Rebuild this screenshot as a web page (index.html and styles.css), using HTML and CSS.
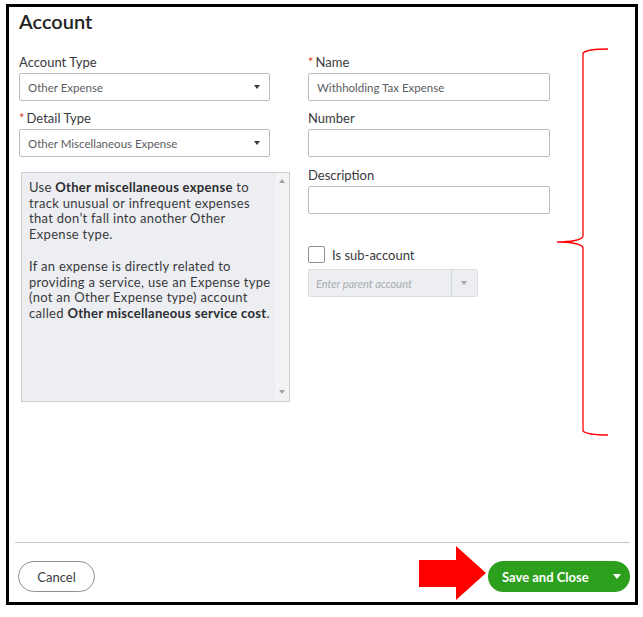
FILE: index.html
```html
<!DOCTYPE html>
<html lang="en">
<head>
  <meta charset="UTF-8">
  <meta name="viewport" content="width=device-width, initial-scale=1.0">
  <title>Account</title>
  <link rel="stylesheet" href="styles.css">
</head>
<body>

  <div class="ventana">
    <div class="titulo">Account</div>

    <div class="cuerpo">
      <div class="col izq">
        <label class="etiqueta">Account Type</label>
        <div class="select">
          <span>Other Expense</span>
          <span class="flecha"></span>
        </div>

        <label class="etiqueta"><span class="req">*</span>Detail Type</label>
        <div class="select">
          <span>Other Miscellaneous Expense</span>
          <span class="flecha"></span>
        </div>

        <div class="ayuda">
          <div class="ayuda-texto">
            <p>Use <b>Other miscellaneous expense</b> to track unusual or infrequent expenses that don’t fall into another Other Expense type.</p>
            <p>If an expense is directly related to providing a service, use an Expense type (not an Other Expense type) account called <b>Other miscellaneous service cost</b>.</p>
          </div>
          <div class="scroll">
            <span class="tri arriba"></span>
            <span class="tri abajo"></span>
          </div>
        </div>
      </div>

      <div class="col der">
        <label class="etiqueta"><span class="req">*</span>Name</label>
        <div class="campo">Withholding Tax Expense</div>

        <label class="etiqueta">Number</label>
        <div class="campo"></div>

        <label class="etiqueta sep">Description</label>
        <div class="campo"></div>

        <div class="sub">
          <span class="check"></span>
          <span>Is sub-account</span>
        </div>
        <div class="padre">
          <span class="padre-texto">Enter parent account</span>
          <span class="padre-btn"><span class="flecha gris"></span></span>
        </div>
      </div>

      <!-- llave roja de anotación -->
      <svg class="llave" width="64" height="394" viewBox="0 0 64 394">
        <path d="M58 3 C 46 3, 36 4, 33 7 L 33 190 C 33 194, 20 196, 7 196 C 20 196, 33 198, 33 202 L 33 385 C 36 388, 46 389, 58 389" fill="none" stroke="#ff0000" stroke-width="1.3"/>
      </svg>
    </div>

    <div class="pie">
      <button class="btn cancelar">Cancel</button>
      <div class="grupo">
        <svg class="flecha-roja" width="68" height="56" viewBox="0 0 68 56">
          <polygon points="0,14 37,14 37,0 67,27 37,54 37,41 0,41" fill="#ff0000"/>
        </svg>
        <button class="btn guardar">
          <span>Save and Close</span>
          <span class="flecha blanca"></span>
        </button>
      </div>
    </div>
  </div>

</body>
</html>
```

FILE: styles.css
```css
body {
  margin: 0;
  background: #fff;
  font-family: 'Lato', 'Noto Sans', sans-serif;
  color: #393a3d;
}

.ventana {
  margin: 4px 0 0 6px;
  width: 632px;
  height: 601px;
  box-sizing: border-box;
  border: 3px solid #000;
  display: flex;
  flex-direction: column;
}

.titulo {
  font-size: 20px;
  font-weight: 600;
  line-height: 24px;
  color: #222;
  padding: 2px 0 0 10px;
}

.cuerpo {
  flex: 1;
  position: relative;
  display: flex;
  gap: 18px;
  padding: 21px 0 0 10px;
}

.col {
  display: flex;
  flex-direction: column;
}

.izq {
  width: 271px;
}

.der {
  width: 242px;
}

.etiqueta {
  font-size: 13px;
  line-height: 16px;
  height: 16px;
  margin-bottom: 3px;
  color: #393a3d;
}

.etiqueta.sep {
  margin-top: 1px;
}

.req {
  color: #e2401c;
  margin-right: 2px;
}

.select, .campo {
  height: 28px;
  box-sizing: border-box;
  border: 1px solid #babec5;
  border-radius: 2px;
  font-size: 11.5px;
  color: #5c5d61;
  padding: 0 8px;
  display: flex;
  align-items: center;
  margin-bottom: 9px;
}

.select {
  width: 251px;
  justify-content: space-between;
}

.campo {
  width: 242px;
}

.flecha {
  width: 0;
  height: 0;
  border-left: 3.5px solid transparent;
  border-right: 3.5px solid transparent;
  border-top: 4px solid #393a3d;
  margin-right: 1px;
}

.flecha.gris {
  border-top-color: #a0a3a8;
}

.flecha.blanca {
  border-left-width: 4.5px;
  border-right-width: 4.5px;
  border-top: 5px solid #fff;
}

.ayuda {
  margin: 6px 0 0 2px;
  width: 269px;
  height: 230px;
  box-sizing: border-box;
  background: #eceef1;
  border: 1px solid #c9ccd1;
  display: flex;
}

.ayuda-texto {
  flex: 1;
  padding: 7px 0 0 7px;
  font-size: 13px;
  line-height: 15.5px;
  letter-spacing: 0.3px;
  color: #393a3d;
}

.ayuda-texto p {
  margin: 0 0 17px;
  width: 246px;
}

.ayuda-texto b {
  font-weight: 700;
  color: #2b2c2f;
}

.scroll {
  width: 17px;
  background: #f2f3f5;
  display: flex;
  flex-direction: column;
  justify-content: space-between;
  align-items: center;
  padding: 6px 0 7px;
}

.tri {
  width: 0;
  height: 0;
  border-left: 3.5px solid transparent;
  border-right: 3.5px solid transparent;
}

.tri.arriba {
  border-bottom: 4px solid #a3a3a3;
}

.tri.abajo {
  border-top: 4px solid #a3a3a3;
}

.sub {
  margin-top: 23px;
  display: flex;
  align-items: center;
  gap: 7px;
  font-size: 13px;
  color: #393a3d;
}

.check {
  width: 17px;
  height: 17px;
  box-sizing: border-box;
  border: 1px solid #8d9096;
  border-radius: 2px;
  background: #fff;
}

.padre {
  margin-top: 6px;
  width: 170px;
  height: 28px;
  box-sizing: border-box;
  background: #eceef1;
  border: 1px solid #dcdee2;
  border-radius: 2px;
  display: flex;
}

.padre-texto {
  flex: 1;
  font-size: 11px;
  font-style: italic;
  color: #a9acb1;
  padding-left: 7px;
  display: flex;
  align-items: center;
}

.padre-btn {
  width: 25px;
  border-left: 1px solid #d4d7db;
  display: flex;
  align-items: center;
  justify-content: center;
}

.llave {
  position: absolute;
  left: 541px;
  top: 13px;
}

.pie {
  height: 60px;
  box-sizing: border-box;
  margin: 0 5px 0 6px;
  border-top: 1px solid #c6c6c6;
  display: flex;
  justify-content: space-between;
  align-items: flex-start;
  padding: 3px 0 0 3px;
}

.grupo {
  display: flex;
  align-items: flex-start;
  gap: 1px;
}

.btn {
  height: 31px;
  border-radius: 16px;
  font-family: inherit;
  font-size: 13px;
  cursor: pointer;
  margin-top: 15px;
}

.cancelar {
  width: 77px;
  background: #fff;
  border: 1px solid #8d9096;
  color: #393a3d;
}

.guardar {
  width: 142px;
  background: #2ca01c;
  border: none;
  color: #fff;
  font-weight: 700;
  display: flex;
  align-items: center;
  justify-content: space-between;
  padding: 0 8px 0 14px;
}

.flecha-roja {
  display: block;
}
```
